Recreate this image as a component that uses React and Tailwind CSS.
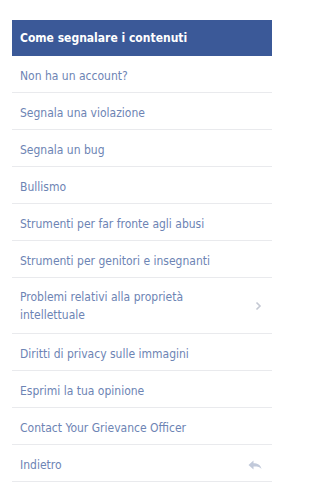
import React from 'react';

const items = [
  { label: 'Non ha un account?' },
  { label: 'Segnala una violazione' },
  { label: 'Segnala un bug' },
  { label: 'Bullismo' },
  { label: 'Strumenti per far fronte agli abusi' },
  { label: 'Strumenti per genitori e insegnanti' },
  { label: 'Problemi relativi alla proprietà intellettuale', icon: 'chevron', tall: true },
  { label: 'Diritti di privacy sulle immagini' },
  { label: 'Esprimi la tua opinione' },
  { label: 'Contact Your Grievance Officer' },
  { label: 'Indietro', icon: 'back' },
];

const Chevron = () => (
  <svg width="7" height="10" viewBox="0 0 7 10" className="shrink-0">
    <path d="M1.5 1.5 L5 5 L1.5 8.5" fill="none" stroke="#c4c8d3" strokeWidth="1.6" />
  </svg>
);

const BackArrow = () => (
  <svg width="14" height="11" viewBox="0 0 14 11" className="shrink-0">
    <path d="M0.5 5 L5.5 0.5 L5.5 3.2 C9.5 3.2 12.5 4.8 13.5 9 C11.8 6.9 9.5 6.5 5.5 6.6 L5.5 9.5 Z" fill="#c1c9da" />
  </svg>
);

export default function App() {
  return (
    <div className="min-h-screen bg-white pt-[20px] pl-[12px]" style={{ fontFamily: 'Tahoma, "DejaVu Sans Condensed", "DejaVu Sans", sans-serif' }}>
      <div className="w-[260px]">
        <div className="h-[36px] bg-[#3b5998] flex items-center px-2">
          <span className="text-white font-bold text-[12px]">Come segnalare i contenuti</span>
        </div>
        <ul>
          {items.map((item, i) => (
            <li
              key={i}
              className={`flex items-center justify-between border-b border-[#e9eaed] pl-2 pr-[10px] text-[12px] leading-[18px] text-[#6d84b4] ${item.tall ? 'min-h-[56px] pt-[10px] pb-[9px]' : 'min-h-[37px] pt-[11px] pb-[7px]'}`}
            >
              <span className="pr-6">{item.label}</span>
              {item.icon === 'chevron' && <Chevron />}
              {item.icon === 'back' && <BackArrow />}
            </li>
          ))}
        </ul>
      </div>
    </div>
  );
}
